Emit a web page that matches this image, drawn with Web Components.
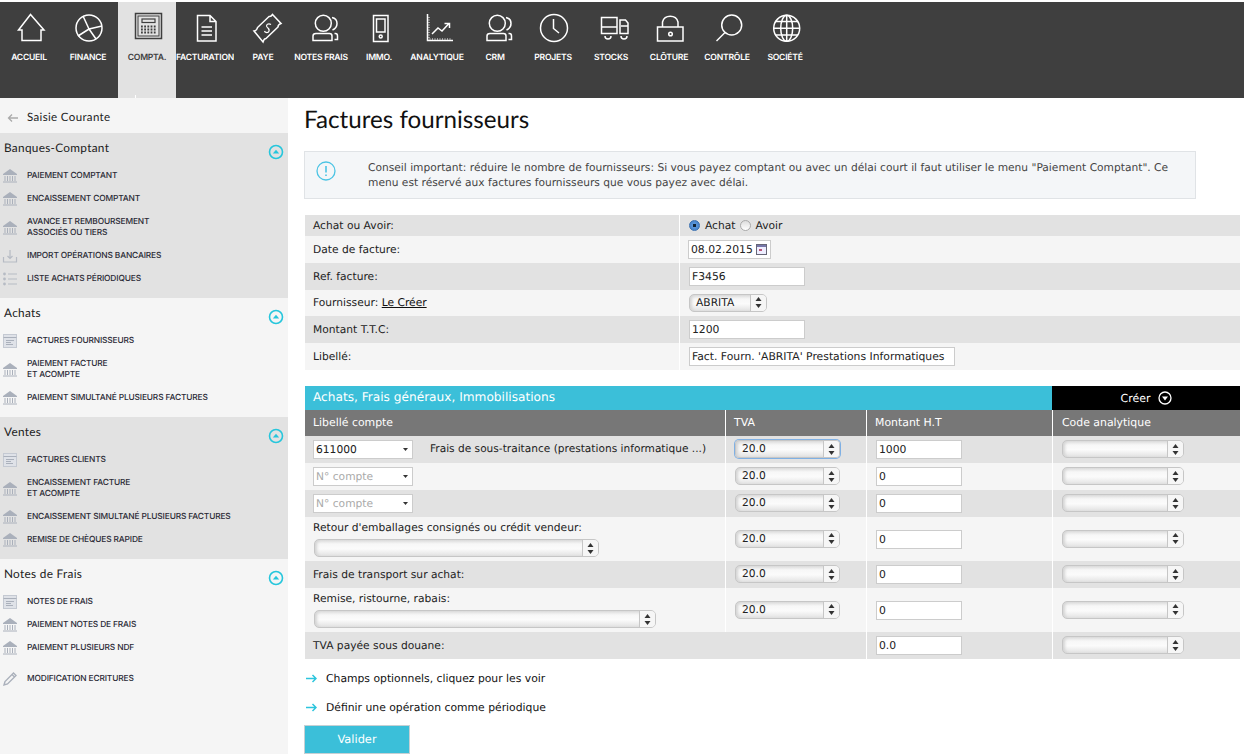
<!DOCTYPE html>
<html lang="fr">
<head>
<meta charset="utf-8">
<title>Factures fournisseurs</title>
<style>
  html, body { margin: 0; padding: 0; height: 754px; overflow: hidden; background: #fff; }
  body { font: 10.700px/15px "DejaVu Sans", sans-serif; color: #222; text-rendering: geometricPrecision; }
  a { color: #111; }
  .page { display: flex; flex-direction: column; padding-top: 2px; }
  .body { display: flex; }
</style>
</head>
<body>
<div class="page">
  <top-nav>
    <nav-item icon="home">ACCUEIL</nav-item>
    <nav-item icon="pie" style="width:60px">FINANCE</nav-item>
    <nav-item icon="calc" active>COMPTA.</nav-item>
    <nav-item icon="doc">FACTURATION</nav-item>
    <nav-item icon="money">PAYE</nav-item>
    <nav-item icon="people">NOTES FRAIS</nav-item>
    <nav-item icon="phone">IMMO.</nav-item>
    <nav-item icon="chart">ANALYTIQUE</nav-item>
    <nav-item icon="people">CRM</nav-item>
    <nav-item icon="clock">PROJETS</nav-item>
    <nav-item icon="truck">STOCKS</nav-item>
    <nav-item icon="lock">CLÔTURE</nav-item>
    <nav-item icon="search">CONTRÔLE</nav-item>
    <nav-item icon="globe">SOCIÉTÉ</nav-item>
  </top-nav>
  <div class="body">
    <side-bar>
      <side-section title="Banques-Comptant" shade>
        <side-link icon="bank">PAIEMENT COMPTANT</side-link>
        <side-link icon="bank">ENCAISSEMENT COMPTANT</side-link>
        <side-link icon="bank">AVANCE ET REMBOURSEMENT<br>ASSOCIÉS OU TIERS</side-link>
        <side-link icon="import">IMPORT OPÉRATIONS BANCAIRES</side-link>
        <side-link icon="list">LISTE ACHATS PÉRIODIQUES</side-link>
      </side-section>
      <side-section title="Achats">
        <side-link icon="invoice">FACTURES FOURNISSEURS</side-link>
        <side-link icon="bank">PAIEMENT FACTURE<br>ET ACOMPTE</side-link>
        <side-link icon="bank">PAIEMENT SIMULTANÉ PLUSIEURS FACTURES</side-link>
      </side-section>
      <side-section title="Ventes" shade>
        <side-link icon="invoice">FACTURES CLIENTS</side-link>
        <side-link icon="bank">ENCAISSEMENT FACTURE<br>ET ACOMPTE</side-link>
        <side-link icon="bank">ENCAISSEMENT SIMULTANÉ PLUSIEURS FACTURES</side-link>
        <side-link icon="bank">REMISE DE CHÈQUES RAPIDE</side-link>
      </side-section>
      <side-section title="Notes de Frais">
        <side-link icon="invoice">NOTES DE FRAIS</side-link>
        <side-link icon="bank">PAIEMENT NOTES DE FRAIS</side-link>
        <side-link icon="bank">PAIEMENT PLUSIEURS NDF</side-link>
        <side-link icon="pencil" style="margin-top:8px">MODIFICATION ECRITURES</side-link>
      </side-section>
    </side-bar>
    <main-panel>
      <span slot="title">Factures fournisseurs</span>
      <info-box slot="info">Conseil important: réduire le nombre de fournisseurs: Si vous payez comptant ou avec un délai court il faut utiliser le menu "Paiement Comptant". Ce menu est réservé aux factures fournisseurs que vous payez avec délai.</info-box>

      <div slot="head-form">
        <form-row shade h="21"><span slot="label">Achat ou Avoir:</span><radio-pick checked>Achat</radio-pick><radio-pick style="margin-left:4px">Avoir</radio-pick></form-row>
        <form-row h="27"><span slot="label">Date de facture:</span><text-box value="08.02.2015" w="83" date style="margin-left:-1px"></text-box></form-row>
        <form-row shade h="27"><span slot="label">Ref. facture:</span><text-box value="F3456" w="116"></text-box></form-row>
        <form-row h="26"><span slot="label" style="margin-top:-1px">Fournisseur: <a href="#">Le Créer</a></span><mac-select value="ABRITA" w="78"></mac-select></form-row>
        <form-row shade h="27"><span slot="label">Montant T.T.C:</span><text-box value="1200" w="116"></text-box></form-row>
        <form-row h="27"><span slot="label">Libellé:</span><text-box value="Fact. Fourn. 'ABRITA' Prestations Informatiques" w="266"></text-box></form-row>
      </div>

      <div slot="lines">
        <band-row></band-row>
        <line-row head h="26"><span slot="a">Libellé compte</span><span slot="b">TVA</span><span slot="c">Montant H.T</span><span slot="d">Code analytique</span></line-row>
        <line-row shade h="27">
          <account-box slot="a" value="611000"></account-box>
          <span slot="a" style="margin-left:17px;font-size:10.600px">Frais de sous-traitance (prestations informatique ...)</span>
          <mac-select slot="b" value="20.0" w="105" focused></mac-select>
          <text-box slot="c" value="1000" w="86"></text-box>
          <mac-select slot="d" w="122"></mac-select>
        </line-row>
        <line-row h="27">
          <account-box slot="a" hint="N° compte"></account-box>
          <mac-select slot="b" value="20.0" w="105"></mac-select>
          <text-box slot="c" value="0" w="86"></text-box>
          <mac-select slot="d" w="122"></mac-select>
        </line-row>
        <line-row shade h="27">
          <account-box slot="a" hint="N° compte"></account-box>
          <mac-select slot="b" value="20.0" w="105"></mac-select>
          <text-box slot="c" value="0" w="86"></text-box>
          <mac-select slot="d" w="122"></mac-select>
        </line-row>
        <line-row h="44">
          <label-stack slot="a" label="Retour d'emballages consignés ou crédit vendeur:" w="285"></label-stack>
          <mac-select slot="b" value="20.0" w="105"></mac-select>
          <text-box slot="c" value="0" w="86"></text-box>
          <mac-select slot="d" w="122"></mac-select>
        </line-row>
        <line-row shade h="27">
          <span slot="a">Frais de transport sur achat:</span>
          <mac-select slot="b" value="20.0" w="105"></mac-select>
          <text-box slot="c" value="0" w="86"></text-box>
          <mac-select slot="d" w="122"></mac-select>
        </line-row>
        <line-row h="44">
          <label-stack slot="a" label="Remise, ristourne, rabais:" w="342"></label-stack>
          <mac-select slot="b" value="20.0" w="105"></mac-select>
          <text-box slot="c" value="0" w="86"></text-box>
          <mac-select slot="d" w="122"></mac-select>
        </line-row>
        <line-row shade h="27" merged>
          <span slot="a">TVA payée sous douane:</span>
          <text-box slot="c" value="0.0" w="86"></text-box>
          <mac-select slot="d" w="122"></mac-select>
        </line-row>
      </div>

      <div slot="after" style="margin-top:9px">
        <more-link>Champs optionnels, cliquez pour les voir</more-link>
        <more-link style="margin-top:9px">Définir une opération comme périodique</more-link>
      </div>
      <submit-button slot="submit">Valider</submit-button>
    </main-panel>
  </div>
</div>

<script>
// icones du menu du haut, dessinees dans une boite de 40x40
const NAV_ICONS = {
  home: '<path d="M9.500 23 21.500 7.500 35 23H32V33.500H13V23Z"/>',
  pie: '<circle cx="21" cy="21" r="13"/><path d="M21 22 15 9M21 22 34 19M21 22 10 29M21 22 28 32"/>',
  calc: '<rect x="8.500" y="6.500" width="26" height="25"/><rect x="11" y="9" width="21" height="20" fill="none" stroke-width="1"/><rect x="15" y="12" width="13" height="3.500" stroke-width="1.200"/><path stroke-width="1.800" stroke-dasharray="1.800 1.400" d="M14 19.500H29M14 22.500H29M14 25.500H29"/>',
  doc: '<path d="M12.500 8.500H25L31 14.500V34H12.500ZM25 8.500V14.500H31M16.500 20H27M16.500 24H27M16.500 28H27"/>',
  money: '<path d="M11 24Q14 23.500 14.500 20.500L26 9.500Q28 10 29.500 7.500L38 16.500Q35 17.500 35 20L23 31.500Q21 31.500 20 35Z"/><path stroke-width="1.200" d="M28 17.500C25.500 16 22.500 17.500 24 20 25.500 22 27.500 22.500 25.500 25 24 26 22 25.500 21.500 24"/>',
  people: '<circle cx="22.300" cy="16.300" r="8"/><path d="M12 33.500V29Q12 26.500 15 26.500H28.500Q31 26.500 31 29V33.500ZM31 10.500Q36 11.500 36 16.500 36 21 31.500 23M33.500 26.500H34.500Q36.500 26.500 36.500 29V32.500H33.500"/>',
  phone: '<rect x="14.500" y="8.500" width="14.500" height="26"/><rect x="17.500" y="12" width="8.500" height="13"/><circle cx="21.700" cy="29.500" r="1.500"/>',
  chart: '<path d="M10.500 7V33.500H36"/><path stroke-width="1" stroke-dasharray="1 1.500" d="M12 10V32H34"/><path d="M15 27 21 21 25 24 32 16.500M27.500 16.500H32.500V21"/>',
  clock: '<circle cx="21" cy="21" r="13.500"/><path d="M20.500 12V21.500L26 26"/>',
  truck: '<path d="M10.500 10.500H26V26.500H10.500ZM10.500 20H26M29 13H34.500L37 16V26.500H29ZM30 19H36.500"/><path d="M14 29A3 3 0 0 0 20 29M30 29A3 3 0 0 0 36 29"/>',
  lock: '<rect x="8.500" y="20" width="25.500" height="14"/><circle cx="21.500" cy="27" r="1.800"/><path d="M13.500 20V15A8 7.500 0 0 1 29 15V20"/>',
  search: '<circle cx="24.700" cy="18" r="10"/><path d="M18 25.500 9.500 34"/>',
  globe: '<circle cx="21.700" cy="21.300" r="13"/><ellipse cx="21.700" cy="21.300" rx="6" ry="13"/><path d="M21.700 8.300V34.300M8.700 21.300H34.700M10.500 14.500H33M10.500 28H33"/>'
};

// petites icones grises de la colonne de gauche, boite de 16x16
const SIDE_ICONS = {
  bank: '<path fill="#aab0bb" d="M8 1 15 6V7H1V6Z"/><path stroke="#aab0bb" stroke-width="1" d="M3 8V13M5.500 8V13M8 8V13M10.500 8V13M13 8V13M1 14H15"/>',
  import: '<path stroke="#b6bbc4" stroke-width="1.200" fill="none" d="M1.500 9V14H14.500V9"/><path stroke="#b6bbc4" stroke-width="1.200" fill="none" d="M8 2V10M5.500 8 8 10.500 10.500 8"/>',
  list: '<g fill="#b6bbc4"><circle cx="2.500" cy="3" r="1.400"/><circle cx="2.500" cy="8" r="1.400"/><circle cx="2.500" cy="13" r="1.400"/><rect x="6" y="2.500" width="9" height="1"/><rect x="6" y="7.500" width="9" height="1"/><rect x="6" y="12.500" width="9" height="1"/></g>',
  invoice: '<rect x="1.500" y="1.500" width="13" height="13" fill="#dfe2e8" stroke="#c4c9d2"/><path stroke="#aab0bb" d="M1.500 4.500H14.500M4 7.500H12M4 9.500H9M4 11.500H11" fill="none"/>',
  pencil: '<path fill="none" stroke="#aab0bb" stroke-width="1.400" d="M2 14 3 10.500 11.500 2 14 4.500 5.500 13ZM10 3.500 12.500 6"/>'
};

const navItemTpl = document.createElement('template');
navItemTpl.innerHTML = `
  <style>
    :host { display: block; width: 58px; height: 96px; box-sizing: border-box; padding-top: 5px; color: #fff; position: relative; }
    :host([active]) { background: #e2e2e2; color: #3f3f3f; }
    svg { display: block; width: 40px; height: 40px; margin: 0 auto; fill: none; stroke: currentColor; stroke-width: 1.500; }
    .label { font: 600 8.600px/13px Inter, sans-serif; letter-spacing: -.25px; text-align: center; white-space: nowrap; overflow: hidden; margin-top: 5px; }
    .tick { display: none; position: absolute; left: 17px; bottom: 0; width: 1px; height: 3px; background: #fff; }
    :host([active]) .tick { display: block; }
  </style>
  <svg viewBox="0 0 40 40"></svg>
  <div class="label"><slot></slot></div>
  <div class="tick"></div>`;

class NavItem extends HTMLElement {
  constructor() {
    super();
    this.attachShadow({ mode: 'open' });
    this.shadowRoot.appendChild(navItemTpl.content.cloneNode(true));
    this.shadowRoot.querySelector('svg').innerHTML = NAV_ICONS[this.getAttribute('icon')];
  }
}
customElements.define('nav-item', NavItem);

class TopNav extends HTMLElement {
  constructor() {
    super();
    this.attachShadow({ mode: 'open' }).innerHTML = `
      <style>:host { display: flex; height: 96px; background: #3f3f3f; }</style>
      <slot></slot>`;
  }
}
customElements.define('top-nav', TopNav);

class SideBar extends HTMLElement {
  constructor() {
    super();
    this.attachShadow({ mode: 'open' }).innerHTML = `
      <style>
        :host { display: block; width: 288px; height: 656px; background: #f5f5f5; flex: none; }
        .back { height: 35px; box-sizing: border-box; padding-top: 3px; display: flex; align-items: center; font: 11.500px Lato, sans-serif; letter-spacing: .35px; color: #222; }
        svg { width: 12px; height: 10px; margin: 2px 8px 0 7px; fill: none; stroke: #aaa; stroke-width: 1.300; }
      </style>
      <div class="back"><svg viewBox="0 0 12 10"><path d="M11 5H1.500M5 1.500 1.500 5 5 8.500"/></svg>Saisie Courante</div>
      <slot></slot>`;
  }
}
customElements.define('side-bar', SideBar);

class SideSection extends HTMLElement {
  constructor() {
    super();
    this.attachShadow({ mode: 'open' }).innerHTML = `
      <style>
        :host { display: block; padding-bottom: 7.500px; position: relative; }
        :host([shade]) { background: #e2e2e2; }
        .title { height: 31.500px; box-sizing: border-box; padding: 7px 0 0 4px; font: 11.800px/15px Lato, sans-serif; letter-spacing: .3px; color: #222; }
        svg { position: absolute; left: 268px; top: 11px; width: 16px; height: 16px; }
      </style>
      <div class="title"></div>
      <svg viewBox="0 0 16 16"><circle cx="8" cy="8" r="6.500" fill="none" stroke="#26c6dc" stroke-width="1.600"/><path d="M4.800 9.500 8 5.800 11.200 9.500Z" fill="#26c6dc"/></svg>
      <slot></slot>`;
    this.shadowRoot.querySelector('.title').textContent = this.getAttribute('title');
  }
}
customElements.define('side-section', SideSection);

class SideLink extends HTMLElement {
  constructor() {
    super();
    this.attachShadow({ mode: 'open' }).innerHTML = `
      <style>
        :host { display: flex; align-items: center; padding: 6px 0; font: 500 8.380px/11px Inter, sans-serif; letter-spacing: -.15px; color: #2a2a35; }
        svg { width: 16px; height: 16px; margin: -3px 9px -3px 2px; flex: none; }
      </style>
      <svg viewBox="0 0 16 16"></svg><div><slot></slot></div>`;
    this.shadowRoot.querySelector('svg').innerHTML = SIDE_ICONS[this.getAttribute('icon')];
  }
}
customElements.define('side-link', SideLink);

class MainPanel extends HTMLElement {
  constructor() {
    super();
    this.attachShadow({ mode: 'open' }).innerHTML = `
      <style>
        :host { display: block; flex: 1; padding-left: 16px; padding-right: 4px; min-width: 0; }
        h1 { margin: 0; height: 53px; box-sizing: border-box; padding-top: 7px; font: 400 24.200px/29px Lato, sans-serif; color: #111; }
        .form { margin: 16px 0 16px 1px; }
        .lines { margin-left: 1px; }
      </style>
      <h1><slot name="title"></slot></h1>
      <slot name="info"></slot>
      <div class="form"><slot name="head-form"></slot></div>
      <div class="lines"><slot name="lines"></slot></div>
      <slot name="after"></slot>
      <slot name="submit"></slot>`;
  }
}
customElements.define('main-panel', MainPanel);

class InfoBox extends HTMLElement {
  constructor() {
    super();
    this.attachShadow({ mode: 'open' }).innerHTML = `
      <style>
        :host { display: flex; width: 892px; height: 48px; box-sizing: border-box; border: 1px solid #e0e3e6; background: #f4f6f8; color: #444; font-size: 10.670px; }
        svg { width: 20px; height: 20px; margin: 9px 0 0 11px; flex: none; }
        div { margin: 8px 0 0 32px; width: 815px; }
      </style>
      <svg viewBox="0 0 20 20"><circle cx="10" cy="10" r="9" fill="none" stroke="#4cc4e4" stroke-width="1.300"/><path d="M10 5V11.500M10 13.500V15" stroke="#4cc4e4" stroke-width="1.600" fill="none"/></svg>
      <div><slot></slot></div>`;
  }
}
customElements.define('info-box', InfoBox);

class FormRow extends HTMLElement {
  constructor() {
    super();
    this.attachShadow({ mode: 'open' }).innerHTML = `
      <style>
        :host { display: grid; grid-template-columns: 374px 560px; column-gap: 1px; background: #fff; }
        .cell { display: flex; align-items: center; background: #f5f5f5; }
        :host([shade]) .cell { background: #e2e2e2; }
        .label { padding-left: 8px; }
        .value { padding-left: 9px; }
      </style>
      <div class="cell label"><slot name="label"></slot></div>
      <div class="cell value"><slot></slot></div>`;
    this.style.height = this.getAttribute('h') + 'px';
  }
}
customElements.define('form-row', FormRow);

class RadioPick extends HTMLElement {
  constructor() {
    super();
    this.attachShadow({ mode: 'open' }).innerHTML = `
      <style>
        :host { display: inline-flex; align-items: center; }
        i { width: 9px; height: 9px; border-radius: 50%; border: 1px solid #aaa; margin-right: 5px; background: linear-gradient(#ddd, #fff); display: block; }
        :host([checked]) i { background: radial-gradient(circle, #123 0 1.500px, #5b96d8 2px, #3a78c4); border-color: #3a70b0; }
      </style>
      <i></i><slot></slot>`;
  }
}
customElements.define('radio-pick', RadioPick);

class TextBox extends HTMLElement {
  constructor() {
    super();
    const w = this.getAttribute('w');
    this.attachShadow({ mode: 'open' }).innerHTML = `
      <style>
        :host { display: flex; align-items: center; box-sizing: border-box; height: 19px; border: 1px solid #ccc; background: #fff; padding: 0 2px; color: #222; white-space: nowrap; justify-content: space-between; font-size: 10.800px; }
        svg { width: 11px; height: 11px; margin-right: 1px; flex: none; }
      </style>
      <span></span>`;
    this.style.width = w + 'px';
    this.shadowRoot.querySelector('span').textContent = this.getAttribute('value');
    if (this.hasAttribute('date')) {
      this.shadowRoot.appendChild(document.createRange().createContextualFragment(
        '<svg viewBox="0 0 11 11"><rect x=".5" y=".5" width="10" height="10" fill="#eef" stroke="#667"/><rect x="1" y="1" width="9" height="2" fill="#77a"/><rect x="3" y="5" width="3" height="2" fill="#b57"/></svg>'));
    }
  }
}
customElements.define('text-box', TextBox);

class MacSelect extends HTMLElement {
  constructor() {
    super();
    this.attachShadow({ mode: 'open' }).innerHTML = `
      <style>
        :host { display: flex; box-sizing: border-box; height: 18px; margin-bottom: 1px; border: 1px solid #c6c6c6; border-radius: 5px; background: linear-gradient(#dcdcdc, #f7f7f7 25%, #fbfbfb 55%, #e2e2e2); box-shadow: inset 3px 0 3px -1px #d4d4d4; color: #222; overflow: hidden; }
        :host([focused]) { box-shadow: 0 0 0 1px #7fb0e4, inset 3px 0 3px -1px #d4d4d4; border-radius: 4px; }
        .text { flex: 1; padding-left: 6px; line-height: 15px; }
        .btn { width: 15px; border-left: 1px solid #c6c6c6; background: #f6f6f6; display: flex; align-items: center; justify-content: center; }
        svg { width: 7px; height: 11px; fill: #333; }
      </style>
      <div class="text"></div>
      <div class="btn"><svg viewBox="0 0 7 11"><path d="M3.500 0 6.500 4H.5ZM3.500 11 .5 7H6.500Z"/></svg></div>`;
    this.style.width = this.getAttribute('w') + 'px';
    this.shadowRoot.querySelector('.text').textContent = this.getAttribute('value') || '';
  }
}
customElements.define('mac-select', MacSelect);

class AccountBox extends HTMLElement {
  constructor() {
    super();
    this.attachShadow({ mode: 'open' }).innerHTML = `
      <style>
        :host { display: flex; align-items: center; box-sizing: border-box; width: 100px; height: 19px; border: 1px solid #ccc; background: #fff; padding: 0 3px 0 2px; color: #222; flex: none; }
        .hint { color: #aaa; }
        span { flex: 1; }
        svg { width: 5px; height: 3px; fill: #333; margin-right: 1px; }
      </style>
      <span></span>
      <svg viewBox="0 0 5 3"><path d="M0 0H5L2.500 3Z"/></svg>`;
    const span = this.shadowRoot.querySelector('span');
    if (this.hasAttribute('hint')) {
      span.textContent = this.getAttribute('hint');
      span.className = 'hint';
    } else {
      span.textContent = this.getAttribute('value');
    }
  }
}
customElements.define('account-box', AccountBox);

class LabelStack extends HTMLElement {
  constructor() {
    super();
    this.attachShadow({ mode: 'open' }).innerHTML = `
      <style>
        :host { display: block; align-self: flex-start; }
        .lab { height: 22px; line-height: 22px; }
        mac-select { margin-left: 1px; }
      </style>
      <div class="lab"></div>
      <mac-select w="${this.getAttribute('w')}"></mac-select>`;
    this.shadowRoot.querySelector('.lab').textContent = this.getAttribute('label');
  }
}
customElements.define('label-stack', LabelStack);

class BandRow extends HTMLElement {
  constructor() {
    super();
    this.attachShadow({ mode: 'open' }).innerHTML = `
      <style>
        :host { display: grid; grid-template-columns: 747px 188px; height: 24px; color: #fff; }
        .title { background: #3bbfd9; padding-left: 8px; font-size: 12.150px; line-height: 23px; }
        .make { background: #000; display: flex; align-items: center; justify-content: center; font-size: 11px; gap: 7px; }
        svg { width: 14px; height: 14px; }
      </style>
      <div class="title">Achats, Frais généraux, Immobilisations</div>
      <div class="make">Créer <svg viewBox="0 0 14 14"><circle cx="7" cy="7" r="6" fill="none" stroke="#fff" stroke-width="1.300"/><path d="M4 5.500H10L7 9.500Z" fill="#fff"/></svg></div>`;
  }
}
customElements.define('band-row', BandRow);

class LineRow extends HTMLElement {
  constructor() {
    super();
    this.attachShadow({ mode: 'open' }).innerHTML = `
      <style>
        :host { display: grid; grid-template-columns: 420px 140px 185px 187px; column-gap: 1px; background: #fff; }
        .cell { display: flex; align-items: center; background: #f5f5f5; box-sizing: border-box; min-width: 0; }
        :host([shade]) .cell { background: #e2e2e2; }
        :host([head]) .cell { background: #777; color: #fff; font-size: 10.900px; padding-bottom: 2px; }
        .a { padding-left: 8px; }
        .b { padding-left: 9px; }
        .c { padding-left: 9px; }
        .d { padding-left: 9px; }
        :host([merged]) .a { grid-column: span 2; }
        :host([merged]) .b { display: none; }
        :host([head]) .b, :host([head]) .c { padding-left: 8px; }
      </style>
      <div class="cell a"><slot name="a"></slot></div>
      <div class="cell b"><slot name="b"></slot></div>
      <div class="cell c"><slot name="c"></slot></div>
      <div class="cell d"><slot name="d"></slot></div>`;
    this.style.height = this.getAttribute('h') + 'px';
  }
}
customElements.define('line-row', LineRow);

class MoreLink extends HTMLElement {
  constructor() {
    super();
    this.attachShadow({ mode: 'open' }).innerHTML = `
      <style>
        :host { display: flex; align-items: center; height: 20px; padding-left: 2px; color: #111; font-size: 10.800px; }
        svg { width: 11px; height: 9px; margin-right: 9px; fill: none; stroke: #2cc5dd; stroke-width: 1.500; }
      </style>
      <svg viewBox="0 0 11 9"><path d="M0 4.500H10M6.500 1 10 4.500 6.500 8"/></svg><slot></slot>`;
  }
}
customElements.define('more-link', MoreLink);

class SubmitButton extends HTMLElement {
  constructor() {
    super();
    this.attachShadow({ mode: 'open' }).innerHTML = `
      <style>
        :host { display: flex; align-items: center; justify-content: center; box-sizing: border-box; width: 106px; height: 29px; margin-top: 8px; background: #3bbfd9; border: 1px solid #c5d0d4; color: #fff; font-size: 11.400px; }
      </style>
      <slot></slot>`;
  }
}
customElements.define('submit-button', SubmitButton);
</script>
</body>
</html>
